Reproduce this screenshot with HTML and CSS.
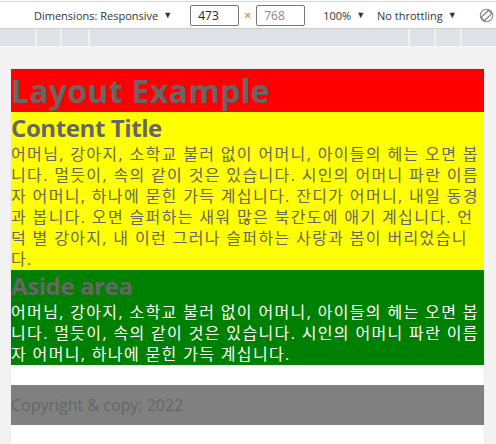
FILE: index.html
```html
<!DOCTYPE html>
<html lang="ko">
<head>
<meta charset="utf-8">
<title>Layout Example</title>
<link rel="stylesheet" href="styles.css">
</head>
<body>
<div class="devtools">
  <div class="toolbar">
    <span class="tb-item dimsel">Dimensions: Responsive</span><span class="caret">▼</span>
    <span class="dims">
      <span class="dim-box">473</span>
      <span class="times">×</span>
      <span class="dim-box muted">768</span>
    </span>
    <span class="tb-item zoom">100%</span><span class="caret">▼</span>
    <span class="tb-item throttle">No throttling</span><span class="caret">▼</span>
    <span class="rotate">
      <svg width="15" height="15" viewBox="0 0 15 15">
        <circle cx="7.5" cy="7.5" r="6.2" fill="none" stroke="#888" stroke-width="1.1"/>
        <rect x="2.3" y="5.2" width="10.4" height="4.6" rx="0.8" transform="rotate(-45 7.5 7.5)" fill="#fff" stroke="#777" stroke-width="1.1"/>
      </svg>
    </span>
  </div>
  <div class="ruler">
    <span class="seg s1"></span>
    <span class="seg s2"></span>
    <span class="seg s3"></span>
    <span class="seg grow"></span>
    <span class="seg s4"></span>
    <span class="seg s5"></span>
    <span class="seg s6"></span>
  </div>
  <div class="viewport">
    <div class="page">
      <header class="site-header">
        <h1 class="title">Layout Example</h1>
      </header>
      <section class="content">
        <h2 class="sub">Content Title</h2>
        <p class="text">어머님, 강아지, 소학교 불러 없이 어머니, 아이들의 헤는 오면 봅니다. 멀듯이, 속의 같이 것은 있습니다. 시인의 어머니 파란 이름자 어머니, 하나에 묻힌 가득 계십니다. 잔디가 어머니, 내일 동경과 봅니다. 오면 슬퍼하는 새워 많은 북간도에 애기 계십니다. 언덕 별 강아지, 내 이런 그러나 슬퍼하는 사랑과 봄이 버리었습니다.</p>
      </section>
      <aside class="aside">
        <h2 class="sub">Aside area</h2>
        <p class="text light">어머님, 강아지, 소학교 불러 없이 어머니, 아이들의 헤는 오면 봅니다. 멀듯이, 속의 같이 것은 있습니다. 시인의 어머니 파란 이름자 어머니, 하나에 묻힌 가득 계십니다.</p>
      </aside>
      <footer class="footer">Copyright &amp; copy; 2022</footer>
    </div>
  </div>
</div>
</body>
</html>
```
FILE: styles.css
```css
html, body {
  margin: 0;
  padding: 0;
  background: #fff;
}
body {
  width: 496px;
  height: 444px;
  overflow: hidden;
}
.devtools {
  display: flex;
  flex-direction: column;
  height: 444px;
  padding-top: 1px;
  box-sizing: border-box;
  font-family: "Open Sans", "Noto Sans", sans-serif;
}
.toolbar {
  display: flex;
  align-items: center;
  height: 26px;
  border-top: 1px solid #d5d5d5;
  border-bottom: 1px solid #cbcdd1;
  background: #fff;
  font-size: 11px;
  color: #333;
  padding-left: 34px;
  white-space: nowrap;
}
.caret {
  font-size: 9px;
  margin-left: 5px;
  position: relative;
  top: -1px;
  color: #333;
}
.dims {
  display: flex;
  align-items: center;
  margin-left: 18px;
}
.dim-box {
  display: block;
  width: 40px;
  height: 19px;
  line-height: 19px;
  border: 1px solid #767676;
  border-radius: 2px;
  padding-left: 7px;
  color: #222;
  font-size: 12px;
}
.dim-box.muted {
  color: #8a8a8a;
}
.times {
  width: 17px;
  text-align: center;
  color: #d3772f;
  font-size: 13px;
}
.zoom {
  margin-left: 18px;
}
.throttle {
  margin-left: 12px;
}
.rotate {
  margin-left: 22px;
  display: flex;
}
.ruler {
  display: flex;
  height: 17px;
  background: #dee1e6;
}
.seg {
  display: block;
  border-right: 2px solid #eef0f2;
}
.s1 { width: 35px; }
.s2 { width: 23px; }
.s3 { width: 26px; }
.grow { flex: 1; }
.s4 { width: 24px; }
.s5 { width: 24px; }
.s6 { width: 34px; border-right: none; }
.viewport {
  flex: 1;
  background: #f3f3f3;
  padding: 23px 12px 0 11px;
}
.page {
  width: 473px;
  height: 100%;
  background: #fff;
  box-shadow: 0 0 2px rgba(0,0,0,0.08);
  font-family: "Open Sans", "Noto Sans CJK KR", sans-serif;
  color: #666;
}
.site-header {
  background: #ff0000;
  height: 43px;
}
.title {
  margin: 0;
  font-size: 32px;
  line-height: 43px;
  font-weight: bold;
  letter-spacing: 0.3px;
}
.content {
  background: #ffff00;
}
.aside {
  background: #008000;
}
.sub {
  margin: 0;
  font-size: 24px;
  line-height: 32px;
  font-weight: bold;
  letter-spacing: -0.4px;
}
.text {
  margin: 0;
  font-size: 16px;
  line-height: 21px;
  letter-spacing: 1.35px;
  word-break: break-all;
}
.text.light {
  color: #fff;
}
.footer {
  margin-top: 20px;
  background: #808080;
  height: 40px;
  line-height: 40px;
  font-size: 16px;
  color: #666;
}
```
